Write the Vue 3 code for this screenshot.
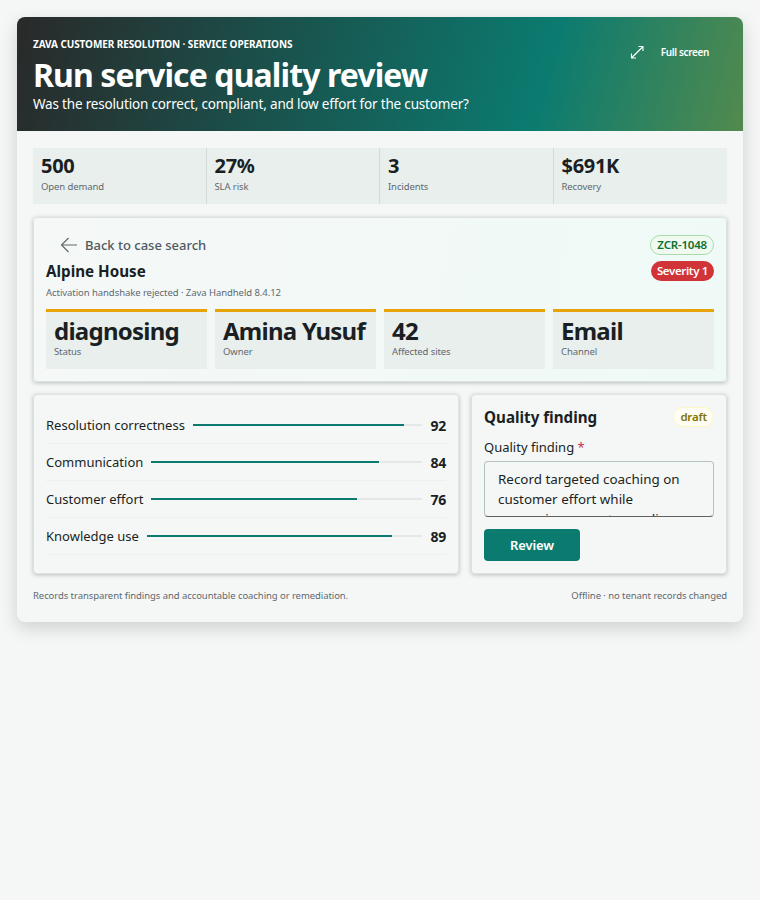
<template>
  <div class="page">
    <main class="shell">
      <header class="hero">
        <div class="hero-text">
          <div class="eyebrow">ZAVA CUSTOMER RESOLUTION · SERVICE OPERATIONS</div>
          <h1>Run service quality review</h1>
          <p>Was the resolution correct, compliant, and low effort for the customer?</p>
        </div>
        <button class="full-btn">
          <svg width="16" height="16" viewBox="0 0 16 16" fill="none" stroke="#fff" stroke-width="1.1">
            <path d="M9.5 2.5h4.5v4.5M14 2.5 2.5 14M2.5 9.5V14H7" />
          </svg>
          <span>Full screen</span>
        </button>
      </header>

      <div class="content">
        <section class="stats">
          <div v-for="s in stats" :key="s.label" class="stat">
            <strong>{{ s.value }}</strong>
            <span>{{ s.label }}</span>
          </div>
        </section>

        <section class="panel case">
          <div class="case-top">
            <div>
              <button class="back">
                <svg width="18" height="16" viewBox="0 0 18 16" fill="none" stroke="#5f6b6b" stroke-width="1.2">
                  <path d="M17 8H1.5M8.5 1 1.5 8l7 7" />
                </svg>
                <span>Back to case search</span>
              </button>
              <h2>Alpine House</h2>
              <div class="sub">Activation handshake rejected · Zava Handheld 8.4.12</div>
            </div>
            <div class="badges">
              <span class="badge id">ZCR-1048</span>
              <span class="badge sev">Severity 1</span>
            </div>
          </div>
          <div class="facts">
            <div v-for="f in facts" :key="f.label" class="fact">
              <strong>{{ f.value }}</strong>
              <span>{{ f.label }}</span>
            </div>
          </div>
        </section>

        <section class="lower">
          <div class="panel scores">
            <div v-for="r in scores" :key="r.label" class="score">
              <span class="score-label">{{ r.label }}</span>
              <div class="track"><div class="fill" :style="{ width: r.value + '%' }" /></div>
              <b>{{ r.value }}</b>
            </div>
          </div>

          <div class="panel finding">
            <div class="finding-head">
              <h3>Quality finding</h3>
              <span class="badge draft">draft</span>
            </div>
            <label for="finding">Quality finding <i>*</i></label>
            <textarea id="finding" v-model="finding" />
            <button class="review">Review</button>
          </div>
        </section>

        <footer class="foot">
          <span>Records transparent findings and accountable coaching or remediation.</span>
          <span>Offline · no tenant records changed</span>
        </footer>
      </div>
    </main>
  </div>
</template>

<script setup>
import { ref } from 'vue'

const stats = [
  { value: '500', label: 'Open demand' },
  { value: '27%', label: 'SLA risk' },
  { value: '3', label: 'Incidents' },
  { value: '$691K', label: 'Recovery' }
]

const facts = [
  { value: 'diagnosing', label: 'Status' },
  { value: 'Amina Yusuf', label: 'Owner' },
  { value: '42', label: 'Affected sites' },
  { value: 'Email', label: 'Channel' }
]

const scores = [
  { label: 'Resolution correctness', value: 92 },
  { label: 'Communication', value: 84 },
  { label: 'Customer effort', value: 76 },
  { label: 'Knowledge use', value: 89 }
]

const finding = ref('Record targeted coaching on customer effort while preserving correct compliance actions.')
</script>

<style scoped>
.page {
  min-height: 900px;
  box-sizing: border-box;
  padding: 17px 17px 0;
  background: #f5f7f6;
  font-family: "Noto Sans", "Open Sans", sans-serif;
  color: #1a1f24;
}

.shell {
  border-radius: 8px;
  overflow: hidden;
  background: #f5f7f6;
  box-shadow: 0 6px 18px rgba(0, 0, 0, 0.16);
}

.hero {
  height: 114px;
  box-sizing: border-box;
  padding: 20px 16px 0;
  display: flex;
  justify-content: space-between;
  color: #fff;
  background: linear-gradient(105deg, #292929 0%, #0b7b70 72%, #528a4e 100%);
}

.eyebrow {
  font-size: 10px;
  line-height: 14px;
  font-weight: 700;
  letter-spacing: -0.1px;
}

h1 {
  margin: 4px 0 0;
  font-size: 32px;
  line-height: 40px;
  font-weight: 700;
  letter-spacing: -0.9px;
}

.hero p {
  margin: -1px 0 0;
  font-size: 13.5px;
  line-height: 20px;
  letter-spacing: -0.18px;
}

.full-btn {
  align-self: flex-start;
  margin: 7px 18px 0 0;
  padding: 0;
  display: flex;
  align-items: center;
  gap: 16px;
  border: 0;
  background: none;
  color: #fff;
  font: 600 10px/16px "Noto Sans", sans-serif;
  letter-spacing: -0.35px;
}

.content {
  padding: 17px 16px 19px;
}

.stats {
  display: grid;
  grid-template-columns: repeat(4, 1fr);
  background: #e9efec;
}

.stat {
  height: 56px;
  box-sizing: border-box;
  padding: 5px 8px;
  border-right: 1px solid #d3dad7;
  display: flex;
  flex-direction: column;
}

.stat:last-child {
  border-right: 0;
}

.stat strong {
  font-size: 20px;
  line-height: 26px;
  font-weight: 700;
  letter-spacing: -0.3px;
}

.stat span,
.fact span {
  font-size: 9.5px;
  line-height: 14px;
  color: #5f6870;
  letter-spacing: -0.1px;
}

.stat span {
  margin-top: 1px;
}

.panel {
  box-sizing: border-box;
  border: 1px solid #dde3e1;
  border-radius: 4px;
  box-shadow: 0 1px 4px rgba(40, 60, 55, 0.3);
  background: #f5f7f6;
}

.case {
  margin-top: 13px;
  height: 165px;
  padding: 12px;
  background: linear-gradient(100deg, #f5f8f7 0%, #effaf7 100%);
}

.case-top {
  display: flex;
  justify-content: space-between;
}

.back {
  padding: 0 0 0 14px;
  height: 30px;
  display: flex;
  align-items: center;
  gap: 7px;
  border: 0;
  background: none;
  color: #4f5860;
  font: 500 13px/18px "Noto Sans", sans-serif;
}

h2 {
  margin: 0;
  font-size: 15.2px;
  line-height: 22px;
  font-weight: 700;
}

.sub {
  margin-top: 4px;
  font-size: 9.5px;
  line-height: 14px;
  color: #5f6870;
  letter-spacing: -0.06px;
}

.badges {
  padding-top: 5px;
  display: flex;
  flex-direction: column;
  align-items: flex-end;
  gap: 6px;
}

.badge {
  box-sizing: border-box;
  height: 20px;
  padding: 0 6px;
  border-radius: 10px;
  font-size: 11.5px;
  font-weight: 600;
  line-height: 18px;
  letter-spacing: -0.2px;
}

.id {
  border: 1px solid #a8dba8;
  color: #0d6f2e;
  background: #f1faf1;
}

.sev {
  line-height: 20px;
  letter-spacing: -0.35px;
  color: #fff;
  background: #d13438;
}

.draft {
  border: 1px solid #fdf6c3;
  color: #817400;
  background: #fffef5;
}

.facts {
  margin-top: 9px;
  display: grid;
  grid-template-columns: repeat(4, 1fr);
  gap: 8px;
}

.fact {
  height: 60px;
  box-sizing: border-box;
  padding: 4px 8px 0;
  border-top: 3px solid #e8a308;
  background: #e9efec;
  display: flex;
  flex-direction: column;
}

.fact strong {
  font-size: 24px;
  line-height: 29px;
  font-weight: 700;
  letter-spacing: -0.75px;
}

.lower {
  margin-top: 12px;
  display: grid;
  grid-template-columns: 426px 256px;
  gap: 12px;
}

.scores {
  height: 180px;
  padding: 12px 12px 0;
}

.score {
  height: 37px;
  box-sizing: border-box;
  display: flex;
  align-items: center;
  gap: 8px;
  border-bottom: 1px solid #eef0ef;
  font-size: 13px;
}

.track {
  flex: 1;
  height: 2px;
  background: #e6e8e7;
}

.fill {
  height: 100%;
  background: #0b7b70;
}

.score b {
  font-size: 14px;
  font-weight: 700;
  letter-spacing: -0.2px;
}

.finding {
  height: 180px;
  padding: 12px;
}

.finding-head {
  display: flex;
  justify-content: space-between;
  align-items: center;
}

h3 {
  margin: 0;
  font-size: 15.2px;
  line-height: 20px;
  font-weight: 700;
}

label {
  display: block;
  margin-top: 11px;
  font-size: 13px;
  line-height: 18px;
}

label i {
  font-style: normal;
  color: #c4314b;
}

textarea {
  display: block;
  width: 100%;
  height: 56px;
  box-sizing: border-box;
  margin-top: 5px;
  padding: 7px 16px 7px 13px;
  resize: none;
  overflow: hidden;
  border: 1px solid #b4c2be;
  border-bottom-color: #616161;
  border-radius: 4px;
  outline: 0;
  background: #f5f7f6;
  color: #1a1f24;
  font: 13.4px/20px "Noto Sans", sans-serif;
}

.review {
  display: block;
  width: 96px;
  height: 32px;
  margin-top: 12px;
  border: 0;
  border-radius: 4px;
  background: #0b7b70;
  color: #fff;
  font: 600 13px/20px "Noto Sans", sans-serif;
  letter-spacing: -0.1px;
}

.foot {
  margin-top: 15px;
  display: flex;
  justify-content: space-between;
  font-size: 9.5px;
  line-height: 14px;
  color: #5f6870;
  letter-spacing: -0.07px;
}
</style>
